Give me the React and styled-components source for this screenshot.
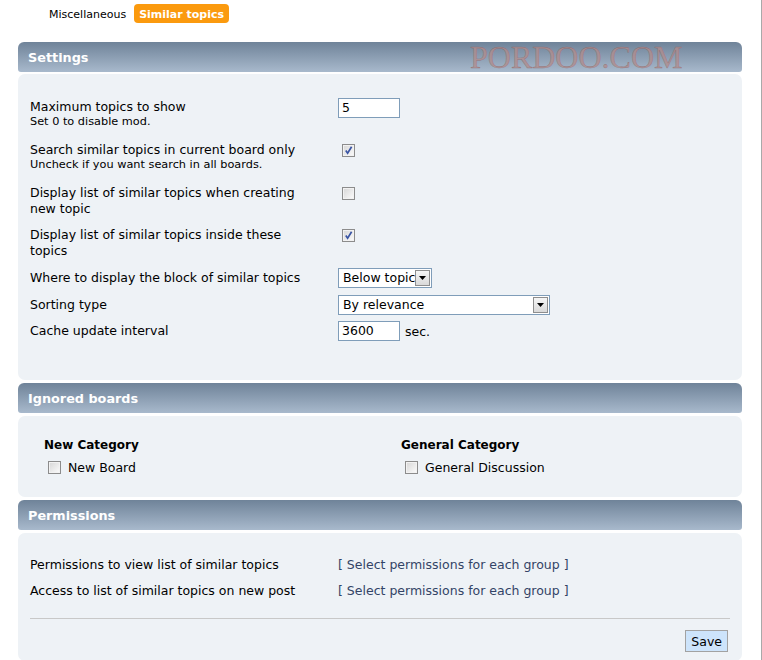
import React from "react";
import styled, { createGlobalStyle } from "styled-components";

const GlobalStyle = createGlobalStyle`
  html, body {
    margin: 0;
    padding: 0;
    background: #fff;
  }
  body {
    font-family: "DejaVu Sans", Verdana, sans-serif;
    color: #000;
  }
`;

const Page = styled.div`
  width: 762px;
  min-height: 660px;
  border-right: 1px solid #a9a9a9;
  box-sizing: border-box;
`;

const TabBar = styled.div`
  height: 42px;
  box-sizing: border-box;
  padding: 4px 0 0 49px;
  display: flex;
  align-items: flex-start;
  gap: 8px;
`;

const Tab = styled.span`
  height: 19px;
  line-height: 21px;
  font-size: 11px;
  padding: ${(p) => (p.$active ? "0 5px" : "0")};
  border-radius: 4px;
  color: ${(p) => (p.$active ? "#fff" : "#000")};
  background: ${(p) => (p.$active ? "#fb9a0e" : "transparent")};
  font-weight: ${(p) => (p.$active ? "bold" : "normal")};
`;

const Section = styled.section`
  width: 724px;
  margin: 0 0 3px 18px;
`;

const Header = styled.h3`
  position: relative;
  margin: 0;
  height: 30px;
  box-sizing: border-box;
  padding: 2px 0 0 10px;
  line-height: 28px;
  border-radius: 6px 6px 3px 3px;
  background: linear-gradient(to bottom, #6f8399, #a8b9cc);
  color: #fff;
  font-size: 12.8px;
  font-weight: bold;
`;

const Watermark = styled.span`
  position: absolute;
  left: 452px;
  top: 1px;
  line-height: 28px;
  font-family: "Liberation Serif", "Times New Roman", serif;
  font-size: 32px;
  font-weight: normal;
  color: rgba(178, 140, 140, 0.75);
  -webkit-text-stroke: 0.4px rgba(140, 95, 95, 0.7);
`;

const Body = styled.div`
  margin-top: ${(p) => p.$top || 2}px;
  background: #eef2f6;
  border-radius: 7px;
  padding: ${(p) => p.$pad};
`;

const Row = styled.div`
  display: grid;
  grid-template-columns: 308px 1fr;
  align-items: start;
  margin-bottom: ${(p) => p.$gap || 0}px;
`;

const Label = styled.div`
  font-size: 12.5px;
  line-height: 16px;
  padding-top: ${(p) => p.$top ?? 1}px;
  padding-right: 30px;
`;

const Desc = styled.span`
  display: block;
  font-size: 11.3px;
  line-height: 14px;
`;

const Control = styled.div`
  display: flex;
  align-items: center;
  gap: 5px;
  font-size: 12.5px;
`;

const TextInput = styled.div`
  width: 62px;
  height: 20px;
  box-sizing: border-box;
  border: 1px solid #7f9db9;
  background: #fff;
  padding: 0 3px;
  line-height: 18px;
  font-size: 12.5px;
`;

const SelectBox = styled.div`
  position: relative;
  width: ${(p) => p.$w}px;
  height: 20px;
  box-sizing: border-box;
  border: 1px solid #7f9db9;
  background: #fff;
  line-height: 18px;
  font-size: 12.5px;
  padding-left: 4px;
  overflow: hidden;
  white-space: nowrap;
`;

const Arrow = styled.span`
  position: absolute;
  right: 1px;
  top: 1px;
  width: 15px;
  height: 16px;
  box-sizing: border-box;
  border: 1px solid #8e8e8e;
  background: linear-gradient(to bottom, #f6f6f6, #d9d9d9);
  display: flex;
  align-items: center;
  justify-content: center;
`;

const Box = styled.span`
  display: inline-flex;
  align-items: center;
  justify-content: center;
  width: 13px;
  height: 13px;
  box-sizing: border-box;
  border: 1px solid #8c8c8c;
  background: linear-gradient(135deg, #d6d6d6, #fcfcfc);
  box-shadow: inset 0 0 0 1px #f2f2f2;
  margin: ${(p) => p.$margin || "3px 0 0 4px"};
  flex: none;
`;

const Checkbox = ({ checked, margin }) => (
  <Box $margin={margin}>
    {checked && (
      <svg width="9" height="9" viewBox="0 0 9 9">
        <path d="M1.8 4.6 L3.6 7.2 L7.6 0.8" fill="none" stroke="#3a55a4" strokeWidth="1.7" />
      </svg>
    )}
  </Box>
);

const Select = ({ width, value }) => (
  <SelectBox $w={width}>
    {value}
    <Arrow>
      <svg width="7" height="4" viewBox="0 0 7 4">
        <path d="M0 0 H7 L3.5 4 Z" fill="#000" />
      </svg>
    </Arrow>
  </SelectBox>
);

const Columns = styled.div`
  display: grid;
  grid-template-columns: 357px 1fr;
`;

const CategoryTitle = styled.div`
  font-size: 12px;
  font-weight: bold;
  line-height: 16px;
`;

const BoardItem = styled.label`
  display: flex;
  align-items: center;
  margin-top: 6px;
  height: 16px;
  font-size: 12.5px;
`;

const LinkText = styled.a`
  color: #334466;
  text-decoration: none;
  font-size: 12.5px;
  line-height: 16px;
  padding-top: 1px;
`;

const Divider = styled.hr`
  border: 0;
  border-top: 1px solid #c8c8c8;
  margin: 19px 0 11px;
`;

const Footer = styled.div`
  display: flex;
  justify-content: flex-end;
  padding-right: 2px;
`;

const SaveButton = styled.button`
  height: 22px;
  padding: 0 5px;
  background: #cde4fb;
  border: 1px solid #a2a2a2;
  font-family: inherit;
  font-size: 12.5px;
  color: #000;
`;

const boards = [
  { category: "New Category", board: "New Board" },
  { category: "General Category", board: "General Discussion" },
];

const selectLink = "[ Select permissions for each group ]";

export default function App() {
  return (
    <Page>
      <GlobalStyle />
      <TabBar>
        <Tab>Miscellaneous</Tab>
        <Tab $active>Similar topics</Tab>
      </TabBar>

      <Section>
        <Header>
          Settings
          <Watermark>PORDOO.COM</Watermark>
        </Header>
        <Body $pad="24px 12px 39px">
          <Row $gap={12}>
            <Label>
              Maximum topics to show
              <Desc>Set 0 to disable mod.</Desc>
            </Label>
            <Control>
              <TextInput>5</TextInput>
            </Control>
          </Row>
          <Row $gap={12}>
            <Label>
              Search similar topics in current board only
              <Desc>Uncheck if you want search in all boards.</Desc>
            </Label>
            <Control>
              <Checkbox checked />
            </Control>
          </Row>
          <Row $gap={9}>
            <Label>Display list of similar topics when creating new topic</Label>
            <Control>
              <Checkbox />
            </Control>
          </Row>
          <Row $gap={9}>
            <Label>Display list of similar topics inside these topics</Label>
            <Control>
              <Checkbox checked />
            </Control>
          </Row>
          <Row $gap={7}>
            <Label $top={2}>Where to display the block of similar topics</Label>
            <Control>
              <Select width={94} value="Below topic" />
            </Control>
          </Row>
          <Row $gap={6}>
            <Label $top={2}>Sorting type</Label>
            <Control>
              <Select width={212} value="By relevance" />
            </Control>
          </Row>
          <Row>
            <Label $top={2}>Cache update interval</Label>
            <Control>
              <TextInput>3600</TextInput>
              sec.
            </Control>
          </Row>
        </Body>
      </Section>

      <Section>
        <Header>Ignored boards</Header>
        <Body $top={3} $pad="21px 26px 22px">
          <Columns>
            {boards.map((b) => (
              <div key={b.category}>
                <CategoryTitle>{b.category}</CategoryTitle>
                <BoardItem>
                  <Checkbox margin="0 7px 0 4px" />
                  {b.board}
                </BoardItem>
              </div>
            ))}
          </Columns>
        </Body>
      </Section>

      <Section>
        <Header>Permissions</Header>
        <Body $top={3} $pad="23px 12px 9px">
          <Row $gap={9}>
            <Label>Permissions to view list of similar topics</Label>
            <Control>
              <LinkText href="#">{selectLink}</LinkText>
            </Control>
          </Row>
          <Row>
            <Label>Access to list of similar topics on new post</Label>
            <Control>
              <LinkText href="#">{selectLink}</LinkText>
            </Control>
          </Row>
          <Divider />
          <Footer>
            <SaveButton>Save</SaveButton>
          </Footer>
        </Body>
      </Section>
    </Page>
  );
}
